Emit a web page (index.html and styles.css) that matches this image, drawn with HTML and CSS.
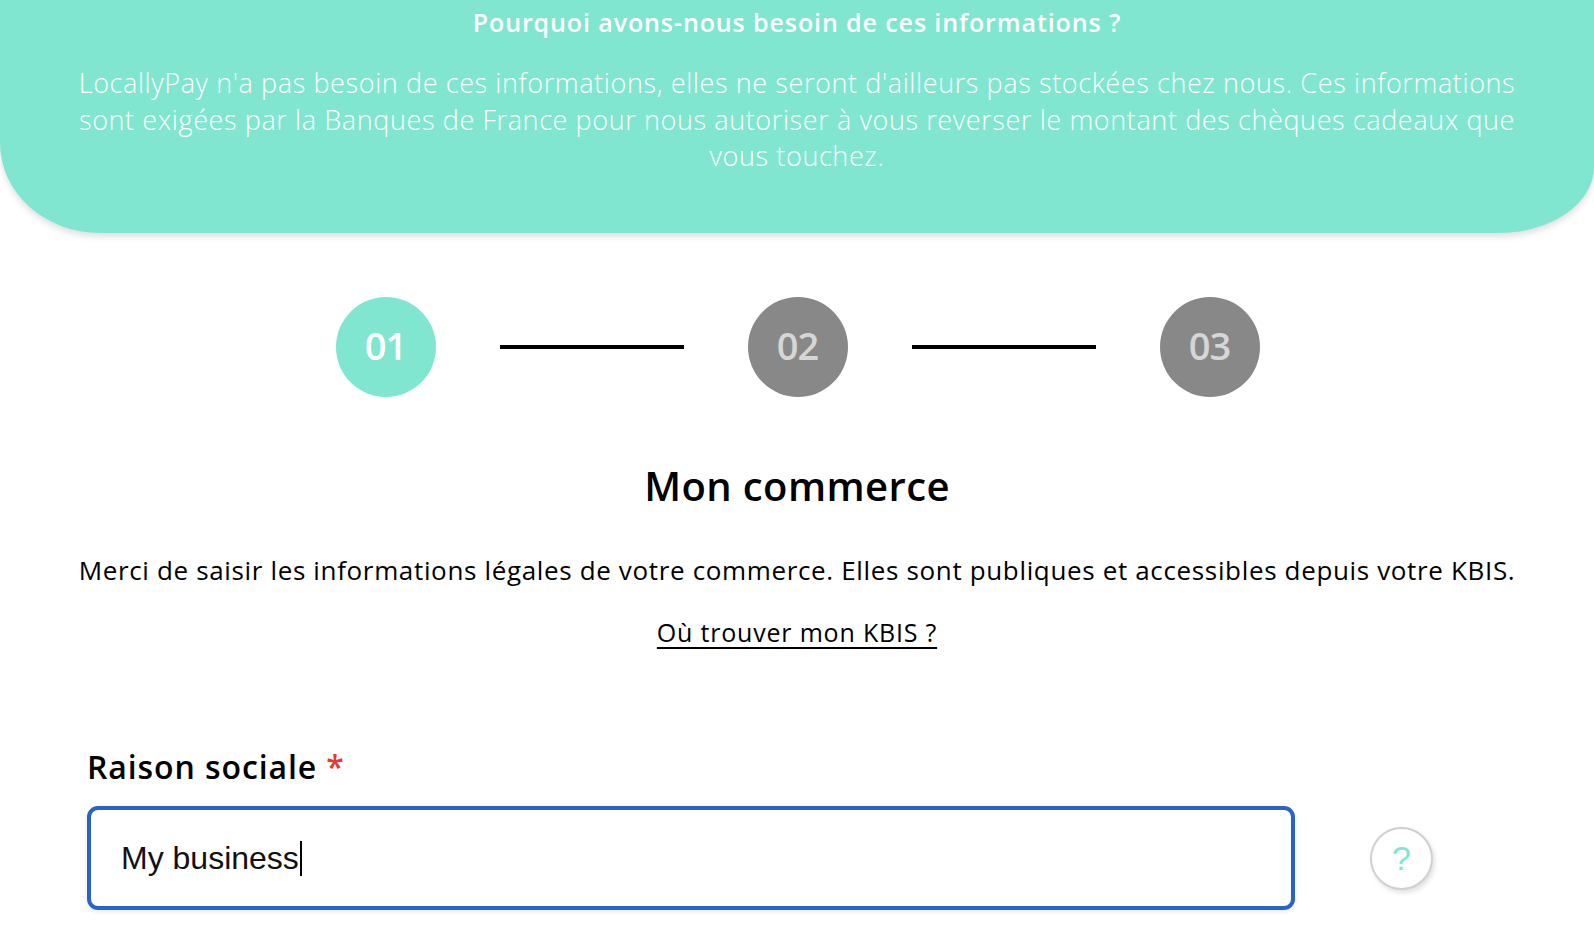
FILE: index.html
```html
<!DOCTYPE html>
<html lang="fr">
<head>
<meta charset="utf-8">
<title>Mon commerce</title>
<link rel="stylesheet" href="styles.css">
</head>
<body>
<header class="banner">
  <h2 class="banner-title">Pourquoi avons-nous besoin de ces informations ?</h2>
  <p class="banner-text">LocallyPay n'a pas besoin de ces informations, elles ne seront d'ailleurs pas stockées chez nous. Ces informations<br>sont exigées par la Banques de France pour nous autoriser à vous reverser le montant des chèques cadeaux que<br>vous touchez.</p>
</header>

<div class="steps">
  <div class="step step-active">01</div>
  <div class="step-line"></div>
  <div class="step">02</div>
  <div class="step-line"></div>
  <div class="step">03</div>
</div>

<main class="content">
  <h1 class="title">Mon commerce</h1>
  <p class="intro">Merci de saisir les informations légales de votre commerce. Elles sont publiques et accessibles depuis votre KBIS.</p>
  <p class="help-link"><a href="#">Où trouver mon KBIS ?</a></p>

  <div class="field">
    <label class="field-label" for="raison">Raison sociale <span class="required">*</span></label>
    <div class="field-row">
      <div class="input-box">
        <span class="input-value">My business</span><span class="caret"></span>
      </div>
      <button class="help-btn" type="button">?</button>
    </div>
  </div>
</main>
</body>
</html>
```
FILE: styles.css
```css
* { box-sizing: border-box; }

html, body {
  margin: 0;
  padding: 0;
  background: #ffffff;
  overflow: hidden;
}

body {
  font-family: "Open Sans", "DejaVu Sans", sans-serif;
  color: #000;
  width: 1594px;
  height: 943px;
}

.banner {
  background: #80e6d0;
  height: 233px;
  border-radius: 0 0 96px 100px / 0 0 66px 90px;
  box-shadow: 0 4px 6px rgba(0, 0, 0, 0.12);
  text-align: center;
  color: #fff;
  padding-top: 6px;
}

.banner-title {
  margin: 0;
  font-size: 25px;
  font-weight: 600;
  line-height: 32px;
  letter-spacing: 0.9px;
}

.banner-text {
  margin: 27px 0 0;
  font-size: 27px;
  font-weight: 300;
  line-height: 36.5px;
  letter-spacing: 0.6px;
}

.steps {
  display: flex;
  align-items: center;
  justify-content: center;
  margin-top: 64px;
  gap: 64px;
  padding-left: 1px;
}

.step {
  width: 100px;
  height: 100px;
  border-radius: 50%;
  background: #888888;
  color: #d6d6d6;
  display: flex;
  align-items: center;
  justify-content: center;
  font-size: 38px;
  font-weight: 600;
  letter-spacing: -1px;
  padding-bottom: 4px;
}

.step-active {
  background: #80e6d0;
  color: #ffffff;
}

.step-line {
  width: 184px;
  height: 4px;
  background: #000;
}

.content {
  padding: 0 0 0 87px;
}

.title {
  margin: 62px 0 0;
  text-align: center;
  font-size: 40px;
  font-weight: 600;
  line-height: 54px;
  letter-spacing: 0.4px;
  padding-right: 87px;
}

.intro {
  margin: 41px 0 0 -87px;
  text-align: center;
  font-size: 26px;
  line-height: 32px;
  letter-spacing: 0.65px;
}

.help-link {
  margin: 30px 0 0 -87px;
  text-align: center;
  font-size: 25px;
  line-height: 32px;
  font-weight: 500;
  letter-spacing: 0.8px;
}

.help-link a {
  color: #000;
  text-decoration: underline;
  text-underline-offset: 5px;
  text-decoration-thickness: 2px;
}

.field {
  margin-top: 99px;
}

.field-label {
  display: block;
  font-size: 32px;
  font-weight: 600;
  line-height: 40px;
  letter-spacing: 0.9px;
}

.required {
  color: #e8392b;
}

.field-row {
  display: flex;
  align-items: center;
  margin-top: 19px;
}

.input-box {
  width: 1208px;
  height: 104px;
  border: 4px solid #2a62c9;
  border-radius: 11px;
  display: flex;
  align-items: center;
  padding-left: 30px;
  box-shadow: 0 2px 4px rgba(0, 0, 0, 0.08);
}

.input-value {
  font-family: "Liberation Sans", Arial, sans-serif;
  font-size: 32px;
  color: #111;
}

.caret {
  display: inline-block;
  width: 2px;
  height: 35px;
  background: #000;
  margin-left: 1px;
}

.help-btn {
  margin-left: 75px;
  width: 63px;
  height: 63px;
  border-radius: 50%;
  border: 2px solid #d0d0d0;
  background: #fff;
  box-shadow: 2px 3px 5px rgba(0, 0, 0, 0.12);
  color: #80e6d0;
  font-family: "Liberation Sans", Arial, sans-serif;
  font-size: 34px;
  line-height: 1;
  padding: 0;
  display: flex;
  align-items: center;
  justify-content: center;
}
```
